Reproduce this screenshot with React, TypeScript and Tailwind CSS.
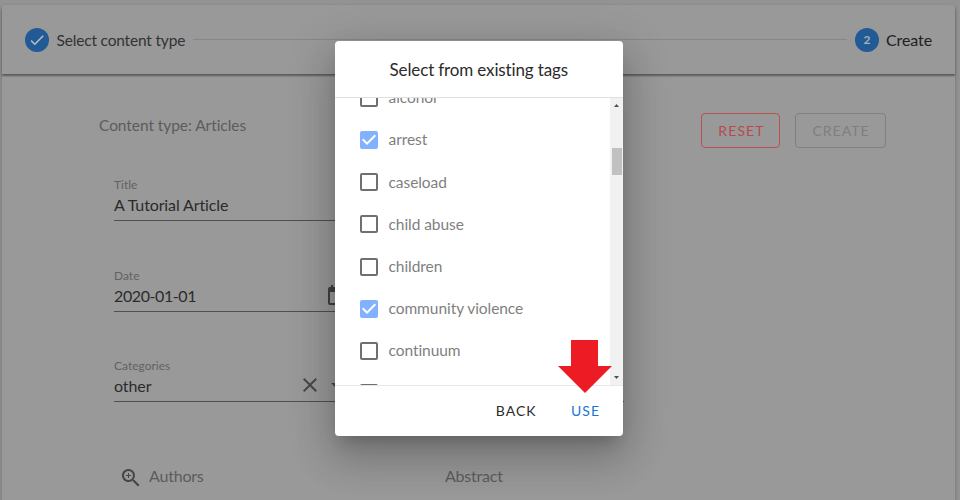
import React from "react";

const CHECK = "M21 7 9 19l-5.5-5.5 1.41-1.41L9 16.17 19.59 5.59 21 7Z";

function Icon({ d, className }: { d: string; className: string }) {
  return (
    <svg viewBox="0 0 24 24" className={className} fill="currentColor">
      <path d={d} />
    </svg>
  );
}

function Field({ label, value, width, tracking, children }: { label: string; value: string; width: string; tracking: string; children?: React.ReactNode }) {
  return (
    <div className={`h-[44px] shrink-0 border-b border-[#4f4f4f] ${width} flex justify-between`}>
      <div className="flex flex-col">
        <span className="text-[12px] leading-[16px] text-[#626262]">{label}</span>
        <span className={`mt-[2px] text-[16px] leading-[20px] text-[#2b2b2b] ${tracking}`}>{value}</span>
      </div>
      {children}
    </div>
  );
}

function Tag({ label, checked }: { label?: string; checked?: boolean }) {
  return (
    <div className="flex h-[42.2px] shrink-0 items-center pl-[22px]">
      <Icon
        className={checked ? "mt-px size-[24px] text-[#82b1ff]" : "mt-px size-[24px] text-[#707070]"}
        d={
          checked
            ? "M10 17 5 12l1.41-1.42L10 14.17l7.59-7.59L19 8M19 3H5a2 2 0 0 0-2 2v14a2 2 0 0 0 2 2h14a2 2 0 0 0 2-2V5a2 2 0 0 0-2-2Z"
            : "M19 3H5a2 2 0 0 0-2 2v14a2 2 0 0 0 2 2h14a2 2 0 0 0 2-2V5a2 2 0 0 0-2-2m0 2v14H5V5h14Z"
        }
      />
      {label && <span className="ml-[8px] text-[15.5px] leading-[20px] tracking-[-0.06px] text-[#7f7f7f]">{label}</span>}
    </div>
  );
}

const tags = [
  { label: "alcohol" },
  { label: "arrest", checked: true },
  { label: "caseload" },
  { label: "child abuse" },
  { label: "children" },
  { label: "community violence", checked: true },
  { label: "continuum" },
  {},
];

export default function App() {
  return (
    <div className="relative h-[500px] w-[960px] overflow-hidden bg-[#939393] pl-[2px] pr-[5px] pt-[5px] font-['Lato',sans-serif] [font-variant-ligatures:none]">
      <div className="flex h-[520px] flex-col rounded-[4px] bg-[#999] shadow-[0_2px_4px_rgba(0,0,0,0.25)]">
        <header className="flex h-[69px] shrink-0 items-center rounded-t-[4px] pl-[23px] pr-[23px] shadow-[0_2px_2px_rgba(0,0,0,0.4)]">
          <span className="flex size-[24px] items-center justify-center rounded-full bg-[#215a94] text-[#b4bfca]">
            <Icon d={CHECK} className="size-[18px]" />
          </span>
          <span className="ml-[7.5px] mt-[3px] text-[15.5px] tracking-[-0.18px] text-[#333]">Select content type</span>
          <span className="mx-[8px] h-px flex-1 bg-[#878787]" />
          <span className="flex size-[24px] items-center justify-center rounded-full bg-[#215a94] text-[12px] font-bold text-[#a4b1be]">2</span>
          <span className="ml-[7px] mt-px text-[16px] tracking-[-0.1px] text-[#202020]">Create</span>
        </header>
        <div className="flex flex-col pl-[97px] pr-[69px] pt-[39px]">
          <div className="flex h-[35px] items-center">
            <span className="mb-[12px] text-[15.5px] leading-[20px] tracking-[-0.06px] text-[#5c5c5c]">Content type: Articles</span>
            <span className="ml-auto flex h-[35px] w-[79px] items-center justify-center rounded-[4px] border border-[#b85050] pb-px pl-[2px] text-[14px] tracking-[1.1px] text-[#b84a4e]">RESET</span>
            <span className="ml-[15px] flex h-[35px] w-[91px] items-center justify-center rounded-[4px] border border-[#808080] pb-px pl-px text-[14px] tracking-[1px] text-[#7e7e7e]">CREATE</span>
          </div>
          <div className="mt-[29px] flex flex-col gap-[46.5px] pl-[15px]">
            <Field label="Title" value="A Tutorial Article" width="w-[240px]" tracking="tracking-[-0.12px]" />
            <Field label="Date" value="2020-01-01" width="w-[240px]" tracking="tracking-[-0.4px]">
              <Icon className="mr-[5px] mt-[16px] size-[24px] text-[#404040]" d="M19 19H5V8h14m-3-7v2H8V1H6v2H5a2 2 0 0 0-2 2v14a2 2 0 0 0 2 2h14a2 2 0 0 0 2-2V5a2 2 0 0 0-2-2h-1V1" />
            </Field>
            <Field label="Categories" value="other" width="w-[510px]" tracking="tracking-[-0.1px]">
              <div className="mr-[276px] mt-[15px] flex gap-[2px] text-[#484848]">
                <Icon className="size-[24px]" d="M19 6.41 17.59 5 12 10.59 6.41 5 5 6.41 10.59 12 5 17.59 6.41 19 12 13.41 17.59 19 19 17.59 13.41 12 19 6.41Z" />
                <Icon className="size-[24px]" d="m7 10 5 5 5-5Z" />
              </div>
            </Field>
          </div>
          <div className="mt-[60px] flex items-center pl-[20px] text-[16px] tracking-[-0.2px] text-[#5c5c5c]">
            <svg viewBox="0 0 24 24" className="mt-[4px] size-[24px] text-[#454545]" fill="currentColor">
              <path d="M15.5 14 20.5 19 19 20.5 14 15.5V14.7L13.7 14.4A6.5 6.5 0 1 1 14.4 13.7L14.7 14ZM9.5 14A4.5 4.5 0 1 0 9.5 5 4.5 4.5 0 0 0 9.5 14M12 10H10V12H9V10H7V9H9V7H10V9H12Z" />
            </svg>
            <span className="ml-[6px] w-[296px]">Authors</span>
            <span>Abstract</span>
          </div>
        </div>
      </div>

      <section className="absolute left-[334.5px] top-[40.5px] flex h-[395.5px] w-[288.5px] flex-col overflow-hidden rounded-[4px] bg-white shadow-[0_11px_15px_-7px_rgba(0,0,0,.2),0_24px_38px_3px_rgba(0,0,0,.14),0_9px_46px_8px_rgba(0,0,0,.12)]">
        <h2 className="flex h-[57px] shrink-0 items-center justify-center border-b border-[#e0e0e0] pt-[2px] text-[17px] tracking-[-0.14px] text-[#2b2b2b]">Select from existing tags</h2>
        <div className="flex h-[287.5px] shrink-0">
          <div className="flex flex-1 flex-col overflow-hidden">
            <div className="-mt-[21.3px] flex flex-col">
              {tags.map((t, i) => (
                <Tag key={i} {...t} />
              ))}
            </div>
          </div>
          <div className="flex w-[13px] flex-col items-center bg-[#f1f1f1] text-[#505050]">
            <svg viewBox="0 0 5 3" className="mt-[6px] h-[3px] w-[5px]" fill="currentColor"><path d="M0 3 2.5 0 5 3Z" /></svg>
            <div className="mt-[41px] h-[27.5px] w-[10px] bg-[#c1c1c1]" />
            <svg viewBox="0 0 5 3" className="mb-[6px] mt-auto h-[3px] w-[5px]" fill="currentColor"><path d="M0 0 2.5 3 5 0Z" /></svg>
          </div>
        </div>
        <footer className="flex flex-1 items-center justify-end border-t border-[#e8e8e8] pb-px pr-[23px] text-[14px] tracking-[1px]">
          <span className="mr-[34.5px] text-[#2b2b2b]">BACK</span>
          <span className="text-[#1976d2]">USE</span>
        </footer>
      </section>
      <svg viewBox="0 0 54 53" className="absolute left-[558px] top-[340px] h-[53px] w-[54px]" fill="#ed1c24">
        <path d="M13 0H40V26H54L27 53 0 26H13Z" />
      </svg>
    </div>
  );
}
